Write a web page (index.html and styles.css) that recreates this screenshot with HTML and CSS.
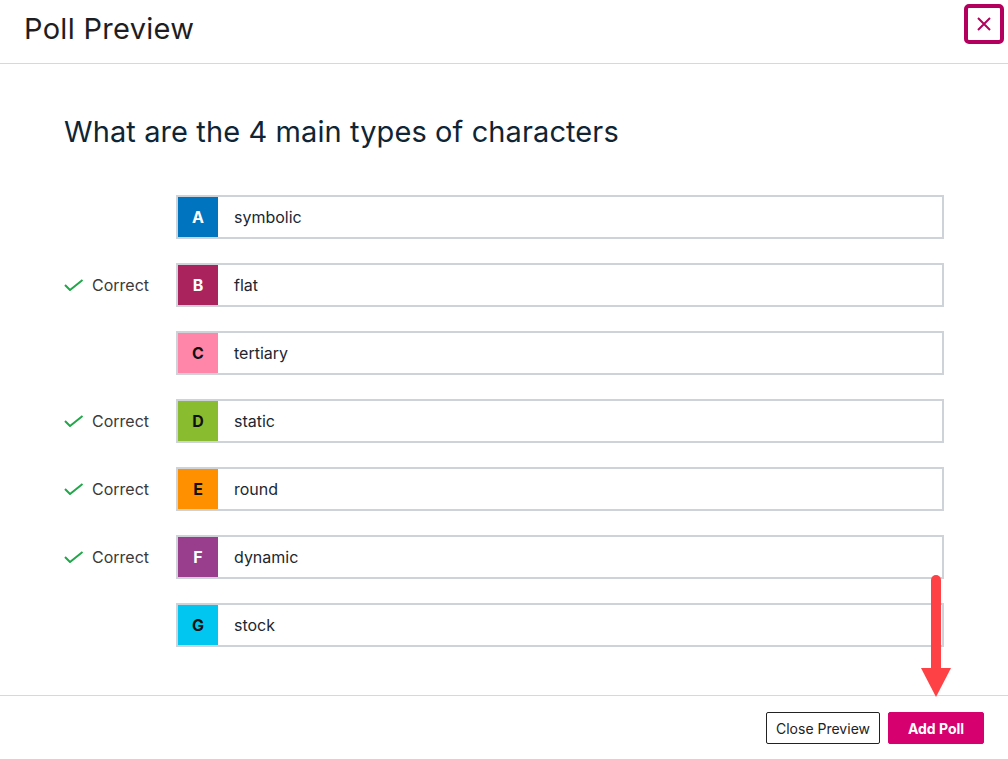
FILE: index.html
```html
<!DOCTYPE html>
<html>
<head>
<meta charset="utf-8">
<link rel="stylesheet" href="styles.css">
</head>
<body>
<div class="modal">
  <header class="modal-header">
    <h1 class="title">Poll Preview</h1>
    <button class="close-btn" aria-label="Close">
      <svg width="16" height="16" viewBox="0 0 16 16"><path d="M2 2L14 14M14 2L2 14" stroke="#b3005f" stroke-width="2" fill="none"/></svg>
    </button>
  </header>
  <main class="modal-body">
    <h2 class="question">What are the 4 main types of characters</h2>
    <ul class="options">
      <li class="option"><span class="mark"></span><div class="box"><span class="letter l-a">A</span><span class="text">symbolic</span></div></li>
      <li class="option"><span class="mark"><svg width="20" height="12" viewBox="0 0 20 12"><path d="M1 6L6 11L18.5 1" stroke="#21a64a" stroke-width="2" fill="none"/></svg>Correct</span><div class="box"><span class="letter l-b">B</span><span class="text">flat</span></div></li>
      <li class="option"><span class="mark"></span><div class="box"><span class="letter l-c">C</span><span class="text">tertiary</span></div></li>
      <li class="option"><span class="mark"><svg width="20" height="12" viewBox="0 0 20 12"><path d="M1 6L6 11L18.5 1" stroke="#21a64a" stroke-width="2" fill="none"/></svg>Correct</span><div class="box"><span class="letter l-d">D</span><span class="text">static</span></div></li>
      <li class="option"><span class="mark"><svg width="20" height="12" viewBox="0 0 20 12"><path d="M1 6L6 11L18.5 1" stroke="#21a64a" stroke-width="2" fill="none"/></svg>Correct</span><div class="box"><span class="letter l-e">E</span><span class="text">round</span></div></li>
      <li class="option"><span class="mark"><svg width="20" height="12" viewBox="0 0 20 12"><path d="M1 6L6 11L18.5 1" stroke="#21a64a" stroke-width="2" fill="none"/></svg>Correct</span><div class="box"><span class="letter l-f">F</span><span class="text">dynamic</span></div></li>
      <li class="option"><span class="mark"></span><div class="box"><span class="letter l-g">G</span><span class="text">stock</span></div></li>
    </ul>
  </main>
  <footer class="modal-footer">
    <button class="btn btn-outline">Close Preview</button>
    <button class="btn btn-primary">Add Poll</button>
  </footer>
  <svg class="arrow" width="34" height="130" viewBox="0 0 34 130">
    <path d="M17 10L17 100" stroke="#fe4144" stroke-width="10" stroke-linecap="round" fill="none"/>
    <path d="M2 98L32 98L17 127Z" fill="#fe4144"/>
  </svg>
</div>
</body>
</html>
```

FILE: styles.css
```css
* { box-sizing: border-box; }
html, body { margin: 0; padding: 0; background: #fff; }
body {
  font-family: Inter, Lato, "Liberation Sans", sans-serif;
  color: #1b2733;
}
.modal {
  position: relative;
  width: 1008px;
  height: 759px;
  display: flex;
  flex-direction: column;
}
.modal-header {
  height: 64px;
  border-bottom: 1px solid #d8d8d8;
  display: flex;
  align-items: flex-start;
  justify-content: space-between;
  padding: 0 4px 0 24px;
}
.title {
  margin: 0;
  padding-top: 12px;
  font-size: 29px;
  letter-spacing: 0.3px;
  font-weight: 400;
  color: #1e1e22;
  line-height: 34px;
}
.close-btn {
  margin-top: 4px;
  width: 40px;
  height: 40px;
  border: 4px solid #b3005f;
  border-radius: 5px;
  background: #fff;
  display: flex;
  align-items: center;
  justify-content: center;
  padding: 0;
}
.modal-body {
  flex: 1;
  padding: 0 64px;
}
.question {
  margin: 0;
  padding-top: 48px;
  height: 131px;
  font-size: 29px;
  letter-spacing: 0.1px;
  font-weight: 400;
  color: #0f2536;
  line-height: 40px;
}
.options {
  list-style: none;
  margin: 0;
  padding: 0;
  display: flex;
  flex-direction: column;
  gap: 24px;
}
.option {
  display: flex;
  align-items: center;
  height: 44px;
}
.mark {
  width: 112px;
  display: flex;
  align-items: center;
  gap: 8px;
  font-size: 16px;
  color: #3a3a3a;
}
.box {
  flex: 1;
  height: 44px;
  border: 2px solid #cdd3d9;
  display: flex;
  align-items: center;
}
.letter {
  width: 40px;
  height: 40px;
  display: flex;
  align-items: center;
  justify-content: center;
  font-weight: 700;
  font-size: 16px;
  color: #111;
}
.text {
  padding-left: 16px;
  font-size: 16px;
  color: #1b2733;
}
.l-a { background: #0174c0; color: #fff; }
.l-b { background: #ab235d; color: #fff; }
.l-c { background: #ff86a9; }
.l-d { background: #89bc2e; }
.l-e { background: #ff9100; }
.l-f { background: #983e8c; color: #fff; }
.l-g { background: #00c6f0; }
.modal-footer {
  height: 64px;
  border-top: 1px solid #d8d8d8;
  display: flex;
  justify-content: flex-end;
  align-items: flex-start;
  gap: 8px;
  padding: 16px 24px 0 0;
}
.btn {
  height: 32px;
  font-family: inherit;
  font-size: 14px;
  border-radius: 2px;
  padding: 0;
}
.btn-outline {
  width: 114px;
  background: #fff;
  border: 1px solid #222;
  color: #222;
}
.btn-primary {
  width: 96px;
  background: #d6006e;
  border: 1px solid #d6006e;
  color: #fff;
  font-weight: 700;
}
.arrow {
  position: absolute;
  left: 919px;
  top: 570px;
}
```
